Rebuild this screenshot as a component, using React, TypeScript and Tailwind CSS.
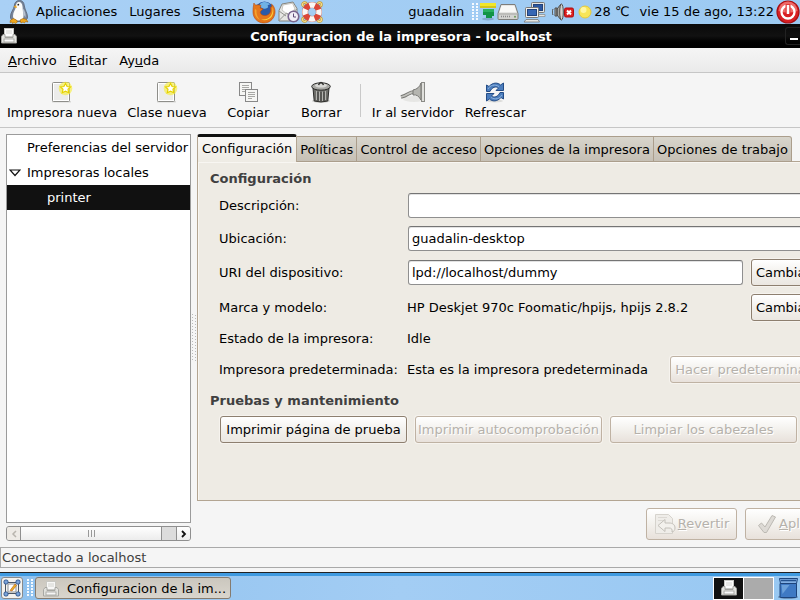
import React from 'react';

type Kids = { children?: React.ReactNode };

function PrinterIcon({ faded = false }: { faded?: boolean }) {
  return (
    <svg className="shrink-0" width="16" height="16" viewBox="0 0 16 16" opacity={faded ? 0.9 : 1} aria-hidden="true">
      <rect x="3.5" y="0.5" width="9" height="8" fill="#fdfdfd" stroke="#c9c9c5" />
      <path d="M5 3h6M5 5h6" stroke="#d4d4d0" />
      <path d="M2 6.500h2v3h8v-3h2l1.500 2v6.500h-15v-6.500z" fill="#e4e4e0" stroke="#a3a39f" />
      <rect x="3" y="11" width="10" height="3" fill="#fafafa" stroke="#9b9b97" strokeWidth="0.8" />
    </svg>
  );
}

function PenguinIcon() {
  return (
    <svg width="20" height="24" viewBox="0 0 20 24" aria-hidden="true">
      <path d="M10.500 0.500C7 0.500 5.500 3 5.300 6 4.500 10 1.500 12 1.500 17c0 3 3 4.500 8.500 4.500s8.500-1.500 8.500-4.500c0-4-2.500-6.500-3.200-11C15 2.500 13.500 .5 10.500 .5z" fill="#77859a" stroke="#5d6879" strokeWidth="0.9" />
      <path d="M10 2C8 2 6.800 4 7 6.500 6.500 10 4 12 4 16c0 3 2.500 4.500 6 4.500 3.500 0 4.500-1.500 4.500-5.500 0-3.500-.7-5-1-8.500C13.300 3.500 12 2 10 2z" fill="#fcfcfa" />
      <path d="M13.500 8c2.500 2.500 3.500 6 3 9.500-1.500-2-3-5.500-3-9.500z" fill="#b8c2d0" />
      <path d="M7 5l-2.500 2 3.500 1z" fill="#f2a71b" />
      <circle cx="9.300" cy="4.700" r="0.900" fill="#222" />
      <path d="M1.500 20l3-1.500 3 1.500 1 2-2 1.500-1.500-1-1.500 1-.5-1.500-2 .5zM11 20l3-1.500 3.500 1 1.500 2.500-2.500-.5-1 1.500-1.500-1-2 1z" fill="#f0a81c" stroke="#a5650c" strokeWidth="0.600" />
    </svg>
  );
}

function FirefoxIcon() {
  return (
    <svg width="24" height="24" viewBox="0 0 24 24" aria-hidden="true">
      <circle cx="12.500" cy="11" r="9.500" fill="#2a5aa8" />
      <path d="M8 4c3-3 8-2.500 10 .5-2 0-3 1-2 2s-3 3-5 2-4-2-3-4.500z" fill="#6fb2e5" />
      <path d="M2 3c.3 1.500 1 2 2.500 2C6 5 7.500 4.500 9 5.500L8 8l3 .8c-1 1.700-2.500 1.700-2.700 3.700.5 2.500 4 4 7 2.500 3-1.300 4-4 3.200-8C20 8 20 5 19.500 4c3 2.500 4.200 6.500 3.200 10.500C21.500 19.500 17 23 12 23 5.500 23 1 18 1 12c0-3.500.3-6 1-9z" fill="#e5761b" stroke="#b64a0d" strokeWidth="0.600" />
      <path d="M20.500 7c1.300 3 1 7-1 10-2.500 3-7 4-10.500 2.500 5 .5 8-1 10-4 1.500-2.500 1.800-5 1.500-8.500z" fill="#fbd43c" />
      <path d="M3 9c-1 5 1 9 5 11-2.500-3-4-6-3.500-10z" fill="#f5a32b" />
    </svg>
  );
}

function MailIcon() {
  return (
    <svg width="22" height="22" viewBox="0 0 22 22" aria-hidden="true">
      <path d="M1 9.500L4 3l11-2 4 6.500V20H1z" fill="#e6e6e3" stroke="#85857f" />
      <path d="M4 9L5 4l9.500-1.700L17 8l-7 6z" fill="#fff" stroke="#b3b3ae" strokeWidth="0.700" />
      <path d="M1 19.500l7.500-7.500 3 2L19 8M1 10l7 5" fill="none" stroke="#93938e" />
      <circle cx="15.500" cy="15.500" r="5.300" fill="#f2eff6" stroke="#79668e" strokeWidth="1.600" />
      <path d="M15.500 12.500v3.500h2.500" fill="none" stroke="#5f4d76" />
    </svg>
  );
}

function BuoyIcon() {
  return (
    <svg width="22" height="22" viewBox="0 0 22 22" aria-hidden="true">
      <g fill="none" stroke="#c79a2c" strokeWidth="2.400">
        <circle cx="3.500" cy="3.500" r="2" />
        <circle cx="18.500" cy="3.500" r="2" />
        <circle cx="3.500" cy="18.500" r="2" />
        <circle cx="18.500" cy="18.500" r="2" />
      </g>
      <g fill="none" stroke="#f3dc8e" strokeWidth="1.200">
        <circle cx="3.500" cy="3.500" r="2" />
        <circle cx="18.500" cy="3.500" r="2" />
        <circle cx="3.500" cy="18.500" r="2" />
        <circle cx="18.500" cy="18.500" r="2" />
      </g>
      <circle cx="11" cy="11" r="7" fill="none" stroke="#a8756f" strokeWidth="6.200" />
      <circle cx="11" cy="11" r="7" fill="none" stroke="#dc4638" strokeWidth="5.400" />
      <circle cx="11" cy="11" r="7" fill="none" stroke="#f9f7f4" strokeWidth="5.400" strokeDasharray="5.500 5.495" strokeDashoffset="2.750" />
    </svg>
  );
}

function GreenAppletIcon() {
  return (
    <svg width="16" height="20" viewBox="0 0 16 20" aria-hidden="true">
      <ellipse cx="8" cy="17" rx="6" ry="1.500" fill="#6f93b8" opacity="0.600" />
      <rect x="0" y="1" width="16" height="5" fill="#f1e62a" />
      <rect x="0" y="4" width="16" height="2" fill="#d3c51f" />
      <path d="M3 7h11v7h-2v2H6v-3H3z" fill="#129447" />
      <path d="M3 7h11v3H3z" fill="#2ab062" />
    </svg>
  );
}

function DriveIcon() {
  return (
    <svg width="22" height="18" viewBox="0 0 22 18" aria-hidden="true">
      <path d="M4 1.500h14l3 9v5q0 1-1 1H2q-1 0-1-1v-5z" fill="#d3d3d0" stroke="#7d7d7a" />
      <path d="M4.500 2.500h13l2.200 7H2.300z" fill="#f8f8f6" />
      <path d="M1.500 11h19" stroke="#a7a7a3" />
      <path d="M4 13.500h9" stroke="#888" strokeWidth="1.500" strokeDasharray="1 1" />
      <circle cx="18" cy="13.700" r="1" fill="#6e9a5b" />
    </svg>
  );
}

function NetworkIcon() {
  return (
    <svg width="23" height="22" viewBox="0 0 23 22" aria-hidden="true">
      <rect x="8.500" y="1.500" width="13" height="10" rx="1" fill="#e6e6e2" stroke="#777" />
      <rect x="10.500" y="3.500" width="9" height="6" fill="#2c58a0" stroke="#22437b" />
      <path d="M12 13.500h10v2H12z" fill="#e6e6e2" stroke="#888" strokeWidth="0.700" />
      <rect x="2.500" y="6.500" width="13" height="10" rx="1" fill="#efefec" stroke="#777" />
      <rect x="4.500" y="8.500" width="9" height="6" fill="#3767b4" stroke="#22437b" />
      <path d="M3 18.500h12l1.500 2.500H1z" fill="#e6e6e2" stroke="#777" strokeWidth="0.800" />
    </svg>
  );
}

function SpeakerIcon() {
  return (
    <svg width="22" height="18" viewBox="0 0 22 18" aria-hidden="true">
      <path d="M1 6c-1 2-1 4 0 6M3 5v8h2V5zM5 6l4-5v16l-4-5z" fill="#a9a9a5" stroke="#4f4f4c" />
      <ellipse cx="9.500" cy="9" rx="1.800" ry="8" fill="#d3d3cf" stroke="#4f4f4c" />
      <rect x="12.500" y="5" width="9" height="9" rx="1.500" fill="#dc1f1f" stroke="#b00d0d" />
      <path d="M15 7.500l4 4M19 7.500l-4 4" stroke="#fff" strokeWidth="2" />
    </svg>
  );
}

function SunIcon() {
  return (
    <svg width="14" height="14" viewBox="0 0 14 14" aria-hidden="true">
      <circle cx="7" cy="7" r="6" fill="#f8e558" stroke="#e5c93c" />
      <circle cx="5.500" cy="5" r="3" fill="#fdf6a4" />
    </svg>
  );
}

function PowerIcon() {
  return (
    <svg width="24" height="24" viewBox="0 0 24 24" aria-hidden="true">
      <circle cx="12" cy="12" r="11" fill="#d81f23" stroke="#a81013" strokeWidth="1.200" />
      <path d="M2.500 11a9.500 9.500 0 0 1 19 0q-9.500 3-19 0z" fill="#ee6a68" />
      <circle cx="12" cy="12" r="6.500" fill="none" stroke="#fff" strokeWidth="2.300" />
      <path d="M12 4v9" stroke="#de3a3a" strokeWidth="5" />
      <path d="M12 5v9" stroke="#fff" strokeWidth="2.500" />
    </svg>
  );
}

function NewDocIcon() {
  return (
    <svg width="22" height="22" viewBox="0 0 22 22" aria-hidden="true">
      <rect x="1" y="20" width="19" height="1.500" fill="#d9d9d7" />
      <rect x="1.500" y="1.500" width="17" height="19" rx="1" fill="#ececea" stroke="#8e8e8a" />
      <rect x="2.500" y="2.500" width="15" height="17" fill="none" stroke="#fff" />
      <circle cx="14.500" cy="7.500" r="6.800" fill="#f7ee42" opacity="0.650" />
      <path d="M14.500 2.500l1.600 3 3.400.4-2.500 2.400.7 3.400-3.200-1.600-3.200 1.600.7-3.400L9.500 5.900l3.400-.4z" fill="#fff" stroke="#e6d200" strokeWidth="1.200" />
    </svg>
  );
}

function CopyIcon() {
  return (
    <svg width="22" height="22" viewBox="0 0 22 22" aria-hidden="true">
      <rect x="2.500" y="1.500" width="12" height="13" fill="#f6f6f4" stroke="#888" />
      <path d="M5 4.500h7M5 6.500h7M5 8.500h7M5 10.500h4" stroke="#a8a8a5" />
      <rect x="8.500" y="8.500" width="12" height="12" fill="#f6f6f4" stroke="#888" />
      <path d="M11 11.500h7M11 13.500h7M11 15.500h7M11 17.500h4" stroke="#a8a8a5" />
    </svg>
  );
}

function TrashIcon() {
  return (
    <svg width="22" height="22" viewBox="0 0 22 22" aria-hidden="true">
      <ellipse cx="11" cy="20" rx="9" ry="1.800" fill="#cfcfcd" />
      <path d="M3 7h16l-1.200 13q-6.800 2-13.600 0z" fill="#6d6d69" stroke="#2e2e2c" />
      <path d="M6.500 10v9M9.500 10.500v9.500M12.500 10.500v9.500M15.500 10v9" stroke="#b4b4b0" />
      <path d="M8 11v9M11 11v9M14 11v9" stroke="#40403e" />
      <ellipse cx="11" cy="5.500" rx="9.300" ry="3.700" fill="#a9a9a5" stroke="#2e2e2c" />
      <ellipse cx="11" cy="4.500" rx="6" ry="2" fill="#d9d9d6" />
      <path d="M8.500 4q2.500-5 5 0" fill="none" stroke="#2e2e2c" strokeWidth="1.400" />
    </svg>
  );
}

function GoServerIcon() {
  return (
    <svg width="26" height="22" viewBox="0 0 26 22" aria-hidden="true">
      <ellipse cx="14" cy="18" rx="11" ry="3" fill="#e6e6e4" />
      <path d="M1 16q4-1 7-3t7-2" fill="none" stroke="#777773" strokeWidth="3.600" />
      <path d="M1 16q4-1 7-3t7-2" fill="none" stroke="#c2c2bd" strokeWidth="1.800" />
      <path d="M13 9q6-1 8-7v17q-3-6-8-5z" fill="#b5b5b0" stroke="#777773" />
      <rect x="21.500" y="1.500" width="3" height="19" fill="#e0e0dc" stroke="#8b8b87" />
    </svg>
  );
}

function RefreshIcon() {
  return (
    <svg width="22" height="22" viewBox="0 0 22 22" aria-hidden="true">
      <ellipse cx="11" cy="20" rx="8" ry="1.500" fill="#dcdcda" />
      <path d="M2.500 10.500V4l2.500 1.500C9 1 14 1.500 16.500 4L19.500 2v7.500H12L14.500 7C12 5 8 6 6 10.500z" fill="#4b7dbd" stroke="#244c86" />
      <path d="M19.500 11.500V18L17 16.500C13 21 8 20.500 5.500 18L2.500 20v-7.500H10L7.500 15C10 17 14 16 16 11.500z" fill="#4b7dbd" stroke="#244c86" />
      <path d="M4 8c2-4 7-5 11-2.500M18 14c-2 4-7 5-11 2.500" fill="none" stroke="#8db2de" />
    </svg>
  );
}

function RevertIcon() {
  return (
    <svg className="shrink-0" width="22" height="22" viewBox="0 0 22 22" aria-hidden="true">
      <path d="M1.500 1.500h13l4 4v15h-17z" fill="#efede9" stroke="#d6d3cd" />
      <path d="M4 4.500h9M4 7.500h6" stroke="#dcd9d4" />
      <path d="M4 12.500l7-6v3.500h4c4 0 6 2 6 5 0 2-1 3.500-3 4 .5-3-.5-4-3-4h-4v3.500z" fill="#f3f1ed" stroke="#c3c0ba" />
    </svg>
  );
}

function ApplyIcon() {
  return (
    <svg className="shrink-0" width="20" height="20" viewBox="0 0 20 20" aria-hidden="true">
      <path d="M1.500 11.500l3-2.500 3.500 4L15 1.500l3.500 1.500L9.500 18.500H7z" fill="#dddad5" stroke="#bcb9b3" strokeLinejoin="round" />
    </svg>
  );
}

function DesktopIcon() {
  return (
    <svg width="18" height="18" viewBox="0 0 18 18" aria-hidden="true">
      <rect x="2.500" y="3.500" width="13" height="11" fill="#f4f4ef" stroke="#4b5563" />
      <g fill="#7ba3d8" stroke="#2f568e">
        <rect x="1" y="1" width="4" height="4" rx="1.500" />
        <rect x="13" y="1" width="4" height="4" rx="1.500" />
        <rect x="1" y="13" width="4" height="4" rx="1.500" />
        <rect x="13" y="13" width="4" height="4" rx="1.500" />
      </g>
      <rect x="5" y="5" width="8" height="8" fill="#fff" stroke="#8a8f96" />
      <path d="M7 11.500l5-6.500 1.500 1.500L9 12z" fill="#eeb422" stroke="#b4551a" strokeWidth="0.600" />
    </svg>
  );
}

function BlueTrashIcon() {
  return (
    <svg width="22" height="22" viewBox="0 0 22 22" aria-hidden="true">
      <ellipse cx="11" cy="20" rx="10" ry="1.800" fill="#5f7fa5" />
      <path d="M3 6.500h16.500v13q0 1-1 1H4q-1 0-1-1z" fill="#3f79c4" stroke="#1d447c" />
      <path d="M4.500 8h8l-7 9z" fill="#6ba0da" />
      <path d="M2.500 1.500h18l-1 5H3.500z" fill="#82b0e4" stroke="#1d447c" />
      <path d="M4 3.500h15" stroke="#24528f" strokeWidth="1.500" />
    </svg>
  );
}

function Grip() {
  return (
    <svg width="6" height="18" viewBox="0 0 6 18" aria-hidden="true">
      <path d="M1 0v18M5 0v18" stroke="#f5faff" strokeWidth="2" strokeDasharray="2 1" />
    </svg>
  );
}

function ToolButton({ icon, children }: Kids & { icon: React.ReactNode }) {
  return (
    <button className="flex min-w-[73px] flex-col items-center gap-px px-[5px] pt-[3px] whitespace-nowrap">
      {icon}
      <span className="leading-[18px]">{children}</span>
    </button>
  );
}

function PushButton({ children, disabled = false, wide = false }: Kids & { disabled?: boolean; wide?: boolean }) {
  const tone = disabled
    ? 'border-[#bfb2a3] text-[#b5b1ab] [text-shadow:1px_1px_0_#ffffff] to-[#e8e1db]'
    : 'border-[#8d7f6f] text-black to-[#ebe7e1]';
  return (
    <button
      disabled={disabled}
      className={`h-[27px] shrink-0 rounded-[3px] border bg-linear-to-b from-white via-[#f3f1ed] whitespace-nowrap shadow-[0_0_0_1px_#f6f3ee] ${tone} ${wide ? 'w-[187px] px-0.5' : 'px-1'}`}
    >
      {children}
    </button>
  );
}

function ActionButton({ icon, children }: Kids & { icon: React.ReactNode }) {
  return (
    <button
      disabled
      className="flex h-8 w-[91px] shrink-0 items-center justify-center gap-0.5 rounded-[3px] border border-[#bfb2a3] bg-linear-to-b from-white via-[#f3f1ed] to-[#e8e1db] text-[#b5b1ab] [text-shadow:1px_1px_0_#ffffff]"
    >
      {icon}
      <span>{children}</span>
    </button>
  );
}

const fieldClass =
  'h-[25px] min-w-0 flex-1 rounded-[3px] border border-[#8f8f8f] border-t-[#747474] bg-white px-[3px] text-black shadow-[inset_0_1px_0_#e2e2e2] outline-none';

function TopPanel() {
  return (
    <header className="flex h-6 shrink-0 items-center bg-linear-to-r from-[#a9d0f5] to-[#9ccaf2] whitespace-nowrap">
      <nav className="flex items-center pl-[9px]">
        <PenguinIcon />
        <button className="ml-[7px]">Aplicaciones</button>
        <button className="ml-3">Lugares</button>
        <button className="ml-3">Sistema</button>
        <button className="ml-[7px]" aria-label="Firefox"><FirefoxIcon /></button>
        <button className="ml-0.5" aria-label="Correo"><MailIcon /></button>
        <button className="ml-px" aria-label="Centro de ayuda"><BuoyIcon /></button>
      </nav>
      <div className="ml-auto flex items-center">
        <span className="mr-2">guadalin</span>
        <Grip />
        <span className="ml-0.5"><GreenAppletIcon /></span>
        <span className="ml-px"><DriveIcon /></span>
        <span className="ml-1"><NetworkIcon /></span>
        <span className="ml-1.5"><SpeakerIcon /></span>
        <span className="ml-1"><SunIcon /></span>
        <span className="ml-0.5">28 ℃</span>
        <span className="ml-2.5">vie 15 de ago, 13:22</span>
        <button className="ml-0.5" aria-label="Apagar"><PowerIcon /></button>
      </div>
    </header>
  );
}

function Sidebar() {
  return (
    <aside className="flex w-[185px] shrink-0 flex-col gap-[3px]">
      <ul className="flex-1 border border-[#9b9b9b] bg-white leading-[25px] whitespace-nowrap">
        <li className="pl-5">Preferencias del servidor</li>
        <li className="flex items-center">
          <svg className="mr-1.5 ml-0.5" width="12" height="8" viewBox="0 0 12 8" aria-hidden="true">
            <path d="M1 1h10L6 6.500z" fill="#fff" stroke="#111" strokeWidth="1.200" />
          </svg>
          Impresoras locales
        </li>
        <li className="bg-[#111111] pl-10 text-white">printer</li>
      </ul>
      <div className="flex h-[15px] overflow-hidden rounded-[3px] border border-[#8f8f8f] bg-[#dcdcdc]">
        <button disabled aria-label="Desplazar a la izquierda" className="flex w-[14px] items-center justify-center border-r border-[#8f8f8f] bg-[#eeebe6]">
          <svg width="6" height="8" viewBox="0 0 6 8"><path d="M5 1L2 4l3 3" fill="none" stroke="#b9b5ae" strokeWidth="1.500" /></svg>
        </button>
        <div className="mr-[14px] flex flex-1 items-center justify-center gap-0.5 border-r border-[#8f8f8f] bg-linear-to-b from-white to-[#ececec]">
          <i className="h-[7px] w-px bg-[#999999]" />
          <i className="h-[7px] w-px bg-[#999999]" />
          <i className="h-[7px] w-px bg-[#999999]" />
        </div>
        <button aria-label="Desplazar a la derecha" className="flex w-[14px] items-center justify-center border-l border-[#8f8f8f] bg-linear-to-b from-white to-[#ececec]">
          <svg width="6" height="8" viewBox="0 0 6 8"><path d="M1 1l3 3-3 3" fill="none" stroke="#111" strokeWidth="1.800" /></svg>
        </button>
      </div>
    </aside>
  );
}

function SplitHandle() {
  return (
    <div className="flex w-1.5 shrink-0 items-center justify-center" role="separator">
      <svg width="6" height="48" viewBox="0 0 6 48" aria-hidden="true">
        <path d="M1.500 0v48M4.500 1v46" stroke="#b9b9b9" strokeDasharray="1 2" />
      </svg>
    </div>
  );
}

const otherTabs = ['Políticas', 'Control de acceso', 'Opciones de la impresora', 'Opciones de trabajo'];

function Tabs() {
  return (
    <div role="tablist" className="relative -mb-px flex items-end whitespace-nowrap">
      <button role="tab" aria-selected="true" className="h-7 rounded-t-[3px] border-x border-t-[3px] border-x-[#b3a592] border-t-[#111111] bg-linear-to-b from-[#f9f8f6] to-[#eeebe4] px-1 pb-0.5">
        Configuración
      </button>
      {otherTabs.map((name) => (
        <button key={name} role="tab" aria-selected="false" className="h-[26px] border-t border-r border-b border-[#ab9e8c] bg-linear-to-b from-[#d8d5cc] to-[#c6c0b5] px-[3px] pt-0.5 last:rounded-tr-[3px]">
          {name}
        </button>
      ))}
    </div>
  );
}

function SettingsForm() {
  return (
    <form className="flex-1 border border-[#b3a592] bg-[#eeebe4] pt-[6px] pr-2 pl-3 shadow-[inset_1px_1px_0_#f8f6f2]">
      <h2 className="leading-[21px] font-bold text-[#404040]">Configuración</h2>
      <div className="pl-[9px] whitespace-nowrap">
        <div className="flex h-[33px] items-center">
          <label htmlFor="desc" className="w-[189px]">Descripción:</label>
          <input id="desc" className={fieldClass} />
        </div>
        <div className="flex h-[33px] items-center">
          <label htmlFor="place" className="w-[189px]">Ubicación:</label>
          <input id="place" defaultValue="guadalin-desktop" className={fieldClass} />
        </div>
        <div className="flex h-[35px] items-center">
          <label htmlFor="uri" className="w-[189px]">URI del dispositivo:</label>
          <input id="uri" defaultValue="lpd://localhost/dummy" className={`${fieldClass} mr-2`} />
          <PushButton>Cambiar...</PushButton>
        </div>
        <div className="flex h-[35px] items-center">
          <span className="w-[188px]">Marca y modelo:</span>
          <span className="flex-1">HP Deskjet 970c Foomatic/hpijs, hpijs 2.8.2</span>
          <PushButton>Cambiar...</PushButton>
        </div>
        <div className="flex h-[27px] items-center">
          <span className="w-[188px]">Estado de la impresora:</span>
          <span>Idle</span>
        </div>
        <div className="flex h-[35px] items-center">
          <span className="w-[188px]">Impresora predeterminada:</span>
          <span className="flex-1">Esta es la impresora predeterminada</span>
          <PushButton disabled>Hacer predeterminada</PushButton>
        </div>
      </div>
      <h2 className="pb-px leading-7 font-bold text-[#404040]">Pruebas y mantenimiento</h2>
      <div className="flex gap-2 pl-[10px]">
        <PushButton wide>Imprimir página de prueba</PushButton>
        <PushButton wide disabled>Imprimir autocomprobación</PushButton>
        <PushButton wide disabled>Limpiar los cabezales</PushButton>
      </div>
    </form>
  );
}

function PrinterWindow() {
  return (
    <div className="flex flex-1 flex-col border-b border-[#222222] bg-[#f5f5f5]">
      <div className="grid h-6 grid-cols-[1fr_auto_1fr] items-center bg-linear-to-b from-[#0a0a0a] via-[#111111] to-black text-white">
        <span className="pl-px"><PrinterIcon /></span>
        <h1 className="pt-px pl-0.5 font-bold">Configuracion de la impresora - localhost</h1>
        <button aria-label="Minimizar" className="flex h-[18px] w-[15px] items-end justify-end justify-self-end rounded-l-[3px] border border-r-0 border-[#222222] pr-0.5 pb-1">
          <span className="h-0.5 w-2 bg-white" />
        </button>
      </div>
      <nav className="flex h-[25px] items-center gap-3 border-b border-[#c6c6c6] bg-linear-to-b from-[#f5f5f5] to-[#eaeaea] pt-px pl-2">
        <button><u>A</u>rchivo</button>
        <button><u>E</u>ditar</button>
        <button>Ay<u>u</u>da</button>
      </nav>
      <div role="toolbar" className="flex h-[55px] items-center border-b border-[#c6c6c6] pl-0.5">
        <ToolButton icon={<NewDocIcon />}>Impresora nueva</ToolButton>
        <ToolButton icon={<NewDocIcon />}>Clase nueva</ToolButton>
        <ToolButton icon={<CopyIcon />}>Copiar</ToolButton>
        <ToolButton icon={<TrashIcon />}>Borrar</ToolButton>
        <span className="mr-1.5 ml-0.5 h-[33px] w-px bg-[#c9c9c9]" />
        <ToolButton icon={<GoServerIcon />}>Ir al servidor</ToolButton>
        <ToolButton icon={<RefreshIcon />}>Refrescar</ToolButton>
      </div>
      <main className="flex flex-1 overflow-hidden py-1.5 pl-1.5">
        <Sidebar />
        <SplitHandle />
        <section className="flex min-w-[639px] flex-1 flex-col">
          <Tabs />
          <SettingsForm />
          <div className="flex justify-end gap-2 pt-[7px] pb-px">
            <ActionButton icon={<RevertIcon />}><u>R</u>evertir</ActionButton>
            <ActionButton icon={<ApplyIcon />}><u>A</u>plicar</ActionButton>
          </div>
        </section>
      </main>
      <footer className="mb-1 h-[21px] border border-r-0 border-[#a9a9a9] pl-px leading-[19px] text-[#404040]">
        Conectado a localhost
      </footer>
    </div>
  );
}

function Taskbar() {
  return (
    <div className="flex h-[27px] shrink-0 items-center border-t-[3px] border-[#3f9ae0] bg-linear-to-r from-[#8fc1ee] via-[#a3cdf4] to-[#98c8f2] pl-px">
      <button aria-label="Mostrar el escritorio" className="flex h-[22px] w-[22px] items-center justify-center rounded-[3px] border border-[#8a8a8a] bg-[#f4f2ee]">
        <DesktopIcon />
      </button>
      <span className="mr-0.5 ml-1"><Grip /></span>
      <button className="flex h-[22px] w-[196px] items-center gap-2 rounded-[3px] border border-[#857b6f] bg-linear-to-b from-[#cbc7be] to-[#d9d5cd] pt-0.5 pl-[7px] whitespace-nowrap">
        <PrinterIcon faded />
        Configuracion de la im...
      </button>
      <div className="ml-auto flex items-center">
        <div className="mr-[3px] flex gap-px border border-white bg-white">
          <button aria-label="Área de trabajo 1" className="flex h-[21px] w-[29px] items-center justify-center bg-[#111111]">
            <PrinterIcon />
          </button>
          <button aria-label="Área de trabajo 2" className="h-[21px] w-[29px] bg-[#ababab]" />
        </div>
        <button aria-label="Papelera" className="mr-px"><BlueTrashIcon /></button>
      </div>
    </div>
  );
}

export default function App() {
  return (
    <div className="flex min-h-screen flex-col overflow-hidden font-['DejaVu_Sans',sans-serif] text-[13px] leading-4 text-black">
      <TopPanel />
      <PrinterWindow />
      <Taskbar />
    </div>
  );
}
